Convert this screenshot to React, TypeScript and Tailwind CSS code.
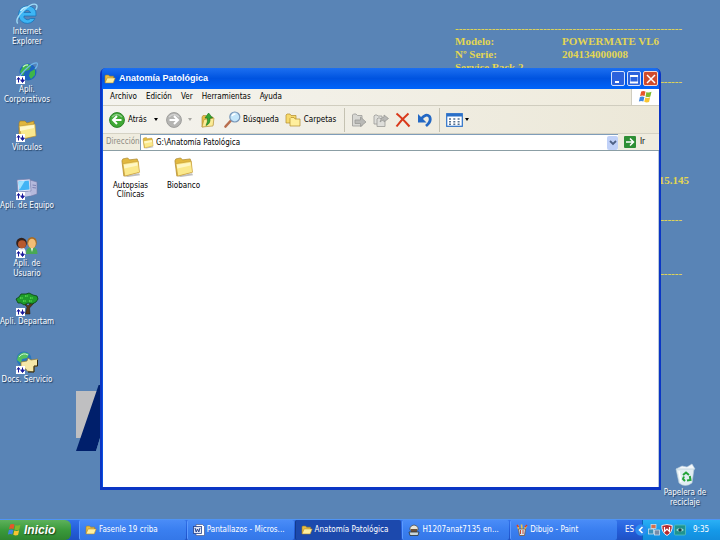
import React from 'react';

type IconProps = { className?: string };

const Folder = ({ className = '' }: IconProps) => (
  <svg viewBox="0 0 22 22" className={className} aria-hidden="true">
    <path d="M5 20 L20 17 L21 19 L8 21Z" fill="#000" opacity=".25" />
    <path d="M2 4 L3 2 L8 1 L10 3 L18 2 L19 5 L19 16 L4 20Z" fill="#e2b93f" stroke="#a8822a" strokeWidth=".7" />
    <path d="M3 7 L19 4.5 L20.5 16 L5 20Z" fill="#fbe98c" stroke="#c79c34" strokeWidth=".7" />
    <path d="M4 8 L18 6 L18.5 9 L4.5 12Z" fill="#fff7c4" />
  </svg>
);

const OpenFolder = ({ className = '' }: IconProps) => (
  <svg viewBox="0 0 16 14" className={className} aria-hidden="true">
    <path d="M1 12 V2.5 L2 1.5 H6 L7.5 3 H13 V6" fill="#e9bd45" stroke="#a57c1c" strokeWidth=".8" />
    <path d="M1 12.5 L4 5.5 H15.3 L12.5 12.5Z" fill="#fff0a0" stroke="#b88a24" strokeWidth=".8" />
  </svg>
);

const Flag = ({ className = '' }: IconProps) => (
  <svg viewBox="0 0 16 15" className={className} aria-hidden="true">
    <path d="M3.4 1.6 Q5.6.3 8 1.7 L7 6.5 Q4.7 5.3 2.2 6.5Z" fill="#e8562a" />
    <path d="M9 2.1 Q11.5 3.3 14.4 2 L13.2 6.9 Q10.6 8 8 6.9Z" fill="#7fba2c" />
    <path d="M2 7.5 Q4.4 6.4 6.8 7.6 L5.7 12.3 Q3.4 11.2.9 12.3Z" fill="#3f86e0" />
    <path d="M7.8 8 Q10.2 9.1 13 7.9 L11.8 12.9 Q9.2 14 6.7 12.7Z" fill="#f8c531" />
  </svg>
);

const Shortcut = () => (
  <g>
    <rect x="1" y="16" width="9" height="8" fill="#fff" />
    <path d="M3.5 22.5 V19 M2 19.5 L3.5 17.5 L5 19.5 M7.5 17.5 V21 M5.8 20 H9.4 L7.5 22.5Z" fill="#1a1a9c" stroke="#1a1a9c" strokeWidth="1" />
  </g>
);

const Glyph = ({ children }: { children: React.ReactNode }) => (
  <svg viewBox="0 0 24 24" className="size-6 shrink-0" aria-hidden="true">
    {children}
  </svg>
);

const Explorer = () => (
  <Glyph>
    <path d="M12 4 A8.7 8.7 0 1 0 20 16.5 H15.5 Q12 19.5 9 15.5 V14 H21 Q22 4 12 4Z M9 10.5 Q12 6 15.8 10.5Z" fill="#3db5f4" fillRule="evenodd" stroke="#116fb8" strokeWidth=".7" />
    <path d="M5.5 9 Q8 5.5 12 5.3" stroke="#b9ecff" strokeWidth="1.4" fill="none" />
    <path d="M2.7 21.5 Q-.5 17 9 8 Q18 0 21.5 3 Q22.8 4.5 20.8 8" stroke="#9fdcf8" strokeWidth="1.4" fill="none" />
  </Glyph>
);

const Globe = () => (
  <Glyph>
    <circle cx="13" cy="12" r="8.5" fill="#1b65bf" />
    <path d="M8 6 Q13 2 16 6 L14 10 L10 11 L8 16 L5 12Z M15 12 L20 9 L20 15 L16 19 L14 16Z" fill="#3fb54a" />
    <path d="M8 7 Q10 4.5 13 5" stroke="#c1f0c0" strokeWidth="1.3" fill="none" />
    <path d="M4 21 Q3 17 10 10 Q18 2 22 3 Q23.5 5 20 9" stroke="#70b6ea" strokeWidth="1.2" fill="none" />
    <Shortcut />
  </Glyph>
);

const FolderLink = () => (
  <Glyph>
    <path d="M4 20 V5 L5 3 L10 3 L12 5 L19 3 V18 L8 21Z" fill="#e0b63e" stroke="#9c7928" strokeWidth=".6" />
    <path d="M4 8 L20 6 L21 18 L7 21Z" fill="#fae88e" stroke="#b78e35" strokeWidth=".6" />
    <path d="M5 9 L19 7 L19 10 L5 13Z" fill="#fff8cb" />
    <Shortcut />
  </Glyph>
);

const Computer = () => (
  <Glyph>
    <path d="M15 4 L22 6 V18 L16 20 L12 18Z" fill="#b5b9dc" stroke="#7378a8" strokeWidth=".6" />
    <path d="M17.5 9 L21 9.5 M17.5 11.5 L21 12" stroke="#6970a5" strokeWidth=".8" />
    <path d="M2 4 L15 3 L16 15 L3 16Z" fill="#e1e4f8" stroke="#7880ae" strokeWidth=".7" />
    <path d="M3.5 5.4 L13.8 4.5 L14.6 13.5 L4.3 14.4Z" fill="#41b4f5" />
    <path d="M3.5 5.4 L10 4.8 L5 13 L4.2 13Z" fill="#9de2ff" />
    <path d="M8 16 L15 15.5 L16 19.5 L9 21Z" fill="#c4c8e6" />
    <Shortcut />
  </Glyph>
);

const Users = () => (
  <Glyph>
    <path d="M11 20 Q11 13 17 13 Q22.5 13 22.5 20Z" fill="#49a854" />
    <path d="M15.5 13 L17 18 L18.5 13Z" fill="#eff7ed" />
    <ellipse cx="17" cy="8.5" rx="4.8" ry="5.6" fill="#a86c23" />
    <ellipse cx="17" cy="9.6" rx="3.8" ry="4.8" fill="#f4bd76" />
    <path d="M2 20 Q2 13 7 13 Q11 14 11 20Z" fill="#e8e8ee" />
    <circle cx="6.5" cy="9" r="5.3" fill="#33211c" />
    <ellipse cx="7" cy="10.2" rx="4" ry="4" fill="#b8592d" />
    <Shortcut />
  </Glyph>
);

const Tree = () => (
  <Glyph>
    <path d="M10.5 22 L12 15 L8 11 L10 11 L13 14 L17 10 L19 11 L14.5 16 L15 22Z" fill="#593817" stroke="#20170a" strokeWidth=".5" />
    <path d="M1 7 L4 5 L6 2 L11 2 L14 1 L18 3 L22 4 L23 7 L21 10 L17 12 L13 11 L9 13 L6 11 L3 11Z" fill="#1f9a2a" stroke="#0a4211" strokeWidth=".8" />
    <path d="M5 6 H8 M10 4 H13 M15 6 H18 M8 9 H11 M14 9 H17" stroke="#56dd4d" strokeWidth="1.3" strokeDasharray="1.5 .8" />
    <Shortcut />
  </Glyph>
);

const Docs = () => (
  <Glyph>
    <circle cx="9" cy="9" r="7.5" fill="#2877bd" />
    <path d="M3 6 Q8 0 14 4 L12 8 L7 9 L6 13 L2 10Z" fill="#54c15b" />
    <path d="M4 7 Q8 2 13 5" stroke="#c6f2e0" fill="none" />
    <path d="M13 8 L16 10 L22.5 9 V16 L19 17 V22 L12 21 L11 19 L6 18 V12 L12 11Z" fill="#f5e8a9" stroke="#92762d" strokeWidth=".7" />
    <path d="M22.5 10 V16 H19 V22 H13" stroke="#2d240c" strokeWidth="1" fill="none" />
    <Shortcut />
  </Glyph>
);

const Bin = () => (
  <Glyph>
    <path d="M3 6 L9 3 L14 4 L19 1 L22 6 L18 8 L6 8Z" fill="#f3f8fb" stroke="#b5cbdc" strokeWidth=".6" />
    <path d="M3 6 L21 6 L19 20 Q12 25 6 20Z" fill="#e2eef3" stroke="#b4c9d6" strokeWidth=".6" />
    <path d="M6 8 L8 19" stroke="#fff" strokeWidth="1.4" />
    <path d="M10 12 L13 9.5 L16 12 M16.8 13 L17.5 17 L14 17.5 M12 18 L10 16 L11 13.5" fill="none" stroke="#25a43a" strokeWidth="2" />
  </Glyph>
);

const shortcuts = [
  { label: 'Internet Explorer', icon: <Explorer /> },
  { label: 'Apli. Corporativos', icon: <Globe /> },
  { label: 'Vínculos', icon: <FolderLink /> },
  { label: 'Apli. de Equipo', icon: <Computer /> },
  { label: 'Apli. de Usuario', icon: <Users /> },
  { label: 'Apli. Departam', icon: <Tree /> },
  { label: 'Docs. Servicio', icon: <Docs /> },
];

const narrow = ['Internet Explorer', 'Apli. Corporativos', 'Apli. de Usuario', 'Papelera de reciclaje'];

const DesktopIcon = ({ label, icon }: { label: string; icon: React.ReactNode }) => (
  <button className="flex h-[58px] w-[54px] flex-col items-center gap-px pt-0.5 text-center leading-[10px] text-white [text-shadow:1px_1px_1px_#1d3a5c]">
    {icon}
    <span className={narrow.includes(label) ? 'w-[48px]' : 'whitespace-nowrap'}>{label}</span>
  </button>
);

const dashes = '-'.repeat(62);

const SystemInfo = () => (
  <div className="absolute top-[22px] right-[31px] w-[234px] font-['Liberation_Serif',serif] text-[11px] leading-[13px] font-bold whitespace-nowrap text-[#e3d653]">
    <p>{dashes}</p>
    <dl className="grid grid-cols-[107px_1fr]">
      <dt>Modelo:</dt>
      <dd>POWERMATE VL6</dd>
      <dt>Nº Serie:</dt>
      <dd>204134000008</dd>
      <dt>Service Pack 2</dt>
    </dl>
    <p className="mt-px">{dashes}</p>
    <p className="mt-[86px] text-right">15.145</p>
    <p className="mt-[26px]">{dashes}</p>
    <p className="mt-[41px]">{dashes}</p>
  </div>
);

const WallpaperLogo = () => (
  <svg viewBox="0 0 30 66" className="absolute top-[385px] left-[76px] h-[66px] w-[30px]" aria-hidden="true">
    <path d="M0 6 H30 V53 H0Z" fill="#bfbfc1" />
    <path d="M24 -4 H30 V40 L24 53 L20 66 H0Z" fill="#001f6b" />
    <path d="M24 53 H30 V66 H20Z" fill="#5984b6" />
  </svg>
);

const Caret = () => (
  <svg viewBox="0 0 4 3" className="h-[3px] w-1" aria-hidden="true">
    <path d="M0 0 H4 L2 3Z" fill="#000" />
  </svg>
);

const TitleBar = () => (
  <header className="flex h-[21px] items-center gap-[3px] rounded-t bg-linear-to-b from-[#1c6ff0] via-[#0053e0] to-[#0064fb] pr-px pl-0.5">
    <OpenFolder className="h-[10px] w-3" />
    <h1 className="flex-1 font-['Liberation_Sans',sans-serif] text-[9px] font-bold text-white">Anatomía Patológica</h1>
    <div className="flex gap-0.5">
      <button aria-label="Minimizar" className="grid h-[15px] w-[14px] place-items-center rounded-xs border border-[#d5e1fb] bg-[#2c62dc]">
        <svg viewBox="0 0 12 12" className="size-3"><path d="M3 9 H7" stroke="#fff" strokeWidth="2" /></svg>
      </button>
      <button aria-label="Maximizar" className="grid h-[15px] w-[14px] place-items-center rounded-xs border border-[#d5e1fb] bg-[#2c62dc]">
        <svg viewBox="0 0 12 12" className="size-3"><path d="M2.5 10 V3 M9.5 3 V10" stroke="#7fa4f1" /><path d="M2 3 H10 M2 9.5 H10" stroke="#fff" strokeWidth="2" /></svg>
      </button>
      <button aria-label="Cerrar" className="grid h-[15px] w-[15px] place-items-center rounded-xs border border-[#f5d9d0] bg-[#cf4b2c]">
        <svg viewBox="0 0 12 12" className="size-3"><path d="M2 2 L10 10 M10 2 L2 10" stroke="#fff" strokeWidth="1.5" /></svg>
      </button>
    </div>
  </header>
);

const MenuBar = () => (
  <nav className="flex h-[17px] items-stretch border-b border-[#d0cdbf] bg-linear-to-r from-[#f4f3ee] to-[#efebdc]">
    <div className="flex flex-1 items-center gap-[9px] pl-[7px]">
      <button>Archivo</button>
      <button>Edición</button>
      <button>Ver</button>
      <button>Herramientas</button>
      <button>Ayuda</button>
    </div>
    <div className="grid w-[28px] place-items-center border-l border-[#d0cdbf] bg-white">
      <Flag className="h-[14px] w-[15px]" />
    </div>
  </nav>
);

const Round = ({ fill, edge, d }: { fill: string; edge: string; d: string }) => (
  <svg viewBox="0 0 16 16" className="size-4" aria-hidden="true">
    <circle cx="8" cy="8" r="7.4" fill={fill} stroke={edge} />
    <path d="M3 5 Q8 0 13 5" stroke="#fff" strokeOpacity=".4" strokeWidth="1.5" fill="none" />
    <path d={d} stroke="#fff" strokeWidth="2" fill="none" />
  </svg>
);

const Toolbar = () => (
  <div className="flex h-[28px] items-center border-b border-[#d5d2c4] bg-linear-to-r from-[#f4f3ee] to-[#ece8d8] pl-1.5">
    <button className="flex w-[43px] items-center gap-[3px]">
      <Round fill="#40a936" edge="#2b8327" d="M12.5 8 H4 M8 4 L4 8 L8 12" />
      Atrás
    </button>
    <button aria-label="Historial atrás" className="grid w-[8px] place-items-center"><Caret /></button>
    <button aria-label="Adelante" className="ml-1.5"><Round fill="#b5b5b3" edge="#9d9d9b" d="M3.5 8 H12 M8 4 L12 8 L8 12" /></button>
    <button aria-label="Historial adelante" className="ml-1.5 opacity-30"><Caret /></button>
    <button aria-label="Arriba" className="ml-2">
      <svg viewBox="0 0 16 16" className="size-4">
        <path d="M2 15 V5 L3 3.5 H6 L8 5 H13 V13Z" fill="#e6bd48" stroke="#a8832c" strokeWidth=".6" />
        <path d="M2 15 L4 7.5 L14 6 L13 14Z" fill="#fbec97" stroke="#b08c30" strokeWidth=".6" />
        <path d="M6 13.5 Q10.5 12 10 6 H12.5 L8.6 1 L5 6 H7.4 Q8 10 6 13.5Z" fill="#37a834" stroke="#19701b" strokeWidth=".6" />
      </svg>
    </button>
    <button className="ml-2 flex items-center gap-0.5">
      <svg viewBox="0 0 17 17" className="size-[17px]">
        <path d="M6.5 10 L1.5 15.5" stroke="#b86e4e" strokeWidth="2.6" strokeLinecap="round" />
        <circle cx="10.8" cy="6" r="5" fill="#c4e6fa" stroke="#7896b8" strokeWidth="1.2" />
        <path d="M8 5 Q9 2.8 11.5 3" stroke="#fff" strokeWidth="1.4" fill="none" />
      </svg>
      Búsqueda
    </button>
    <button className="ml-1.5 flex items-center gap-[3px]">
      <svg viewBox="0 0 16 14" className="h-[14px] w-4">
        <path d="M1 10 V2 L2 1 H5 L6 2.5 H11 V10Z" fill="#f7da6c" stroke="#b28d2b" strokeWidth=".7" />
        <path d="M5 13 V5.5 L6 4.5 H9 L10 6 H15 V13Z" fill="#ffef9d" stroke="#b28d2b" strokeWidth=".7" />
      </svg>
      Carpetas
    </button>
    <div className="mr-1.5 ml-2 h-6 w-px bg-[#c5c2b2]" />
    <button aria-label="Mover a">
      <svg viewBox="0 0 16 16" className="size-4" fill="#d8d8d4" stroke="#9b9b97" strokeWidth=".8">
        <path d="M1.5 14 V3 L2.5 2 H5 L6.5 3.5 H11 V14Z" />
        <path d="M4 8 H9.5 V5 L15 10 L9.5 14.5 V11.5 H4Z" fill="#b9b9b6" />
      </svg>
    </button>
    <button aria-label="Copiar a" className="ml-1.5">
      <svg viewBox="0 0 16 16" className="size-4" fill="#dededa" stroke="#9b9b97" strokeWidth=".8">
        <path d="M1 12 V4 L2 3 H4 L5 4 H9 V12Z" />
        <path d="M4 14.5 V7 L5 6 H7 L8 7 H12 V14.5Z" />
        <path d="M7 10 Q8 5 11 5 V3 L15.5 6.5 L11 10 V8 Q9 8 7 10Z" fill="#b9b9b6" />
      </svg>
    </button>
    <button aria-label="Eliminar" className="ml-1.5">
      <svg viewBox="0 0 16 16" className="size-4">
        <path d="M1.5 1.5 Q7 6 14.5 14.5 M13.5 1.5 Q7 7 1.5 14.5" stroke="#d93a1c" strokeWidth="2.1" fill="none" />
      </svg>
    </button>
    <button aria-label="Deshacer" className="ml-1.5">
      <svg viewBox="0 0 16 16" className="size-4">
        <path d="M4 7 Q9 1 12.5 4.5 Q15 9 9 14" stroke="#2368c4" strokeWidth="2.8" fill="none" />
        <path d="M1 2 V10.5 H9.5Z" fill="#2368c4" />
      </svg>
    </button>
    <div className="mx-1.5 h-6 w-px bg-[#c5c2b2]" />
    <button aria-label="Vistas" className="flex items-center gap-0.5">
      <svg viewBox="0 0 17 14" className="h-[14px] w-[17px]">
        <rect x=".7" y=".7" width="15.6" height="12.6" fill="#fff" stroke="#2b70c8" strokeWidth="1.2" />
        <path d="M1 2.2 H16" stroke="#2b70c8" strokeWidth="2.6" />
        <path d="M3 6 H14 M3 8.7 H14 M3 11.2 H14" stroke="#55708e" strokeWidth="1.4" strokeDasharray="2 2.3" />
      </svg>
      <Caret />
    </button>
  </div>
);

const AddressBar = () => (
  <div className="flex h-[17px] items-stretch border-b border-[#8b9ea5] bg-[#efecdf]">
    <label htmlFor="address" className="flex w-[37px] items-center pl-[3px] text-[#8d8b82]">Dirección</label>
    <div className="flex flex-1 items-center gap-0.5 border-t border-l border-[#7f9db9] bg-white pl-px">
      <Folder className="size-3" />
      <input id="address" defaultValue="G:\Anatomía Patológica" className="min-w-0 flex-1 bg-transparent outline-none" />
      <button aria-label="Desplegar direcciones" className="grid h-[14px] w-[11px] place-items-center rounded-xs bg-[#c0d1f8]">
        <svg viewBox="0 0 8 6" className="h-[6px] w-2"><path d="M1 1 L4 4 L7 1" stroke="#4d6185" strokeWidth="1.8" fill="none" /></svg>
      </button>
    </div>
    <button className="flex w-[41px] items-center gap-1 pl-1.5">
      <svg viewBox="0 0 12 12" className="size-3">
        <rect width="12" height="12" rx="1" fill="#2e8f36" />
        <path d="M2 6 H9 M6 2.5 L9.5 6 L6 9.5" stroke="#fff" strokeWidth="1.5" fill="none" />
      </svg>
      Ir
    </button>
  </div>
);

const ExplorerWindow = () => (
  <section className="absolute inset-x-0 top-[68px] bottom-[29px] mr-[59px] ml-[100px] flex flex-col rounded-t-md border-x-2 border-b-3 border-[#0b35c4] bg-[#0b50e0]">
    <TitleBar />
    <div className="ml-px flex flex-1 flex-col bg-white">
      <MenuBar />
      <Toolbar />
      <AddressBar />
      <main className="flex flex-1 items-start border-r border-[#b9c8dc] bg-white pt-1.5 pl-px text-center leading-[9px]">
        {['Autopsias Clínicas', 'Biobanco'].map((name) => (
          <button key={name} className="flex w-[53px] flex-col items-center gap-[3px]">
            <Folder className="size-[21px]" />
            <span className="w-[44px]">{name}</span>
          </button>
        ))}
      </main>
    </div>
  </section>
);

const WordIcon = () => (
  <svg viewBox="0 0 12 12" className="size-3 shrink-0" aria-hidden="true">
    <path d="M3 .5 H9.5 L11.5 2.5 V11.5 H3Z" fill="#fff" stroke="#4c5a8b" strokeWidth=".7" />
    <rect x=".5" y="2.5" width="8" height="7" fill="#dfe6f7" stroke="#24418c" strokeWidth=".8" />
    <path d="M2 4 L3.2 8 L4.5 5 L5.8 8 L7 4" fill="none" stroke="#24418c" strokeWidth="1" />
  </svg>
);

const ViewerIcon = () => (
  <svg viewBox="0 0 12 12" className="size-3 shrink-0" aria-hidden="true">
    <path d="M2 3.5 Q6 -1.5 10 3.5 V6 H2Z" fill="#e9e5d8" stroke="#4e4536" strokeWidth=".7" />
    <path d="M3 5 H9 V8 H3Z" fill="#6a503b" />
    <path d="M1 8 H11 L10 11.5 H2Z" fill="#c9d6da" stroke="#29343a" strokeWidth=".8" />
  </svg>
);

const PaintIcon = () => (
  <svg viewBox="0 0 12 12" className="size-3 shrink-0" aria-hidden="true">
    <path d="M3 6 L1.5 1 M6 6 L5.5 .5 M8 6 L10.5 1.5" stroke="#e8c553" strokeWidth="1.7" />
    <path d="M1 1 L2.5 3 M9 3 L11 1" stroke="#d43a2c" strokeWidth="1.5" />
    <path d="M2.5 5 H9.5 L8.5 11.5 H3.5Z" fill="#d9e6ef" stroke="#77553c" strokeWidth=".8" />
    <path d="M4.5 6 V10 M7 6 V10" stroke="#c5482f" />
  </svg>
);

const tasks = [
  { label: 'Fasenle 19 criba', icon: <OpenFolder className="h-[10px] w-3 shrink-0" /> },
  { label: 'Pantallazos - Micros...', icon: <WordIcon /> },
  { label: 'Anatomía Patológica', icon: <OpenFolder className="h-[10px] w-3 shrink-0" />, active: true },
  { label: 'H1207anat7135 en...', icon: <ViewerIcon /> },
  { label: 'Dibujo - Paint', icon: <PaintIcon /> },
];

const Taskbar = () => (
  <footer className="flex h-[21px] items-stretch border-t border-[#4f94f5] bg-linear-to-b from-[#3372e8] via-[#245edb] to-[#1f51c4] text-white">
    <button className="flex w-[71px] items-center gap-0.5 rounded-r-md bg-linear-to-b from-[#5db15b] via-[#3a9a3b] to-[#2f8530] pl-[7px] font-['Liberation_Sans',sans-serif] text-[12px] font-bold italic [text-shadow:1px_1px_1px_#1d4a1d]">
      <Flag className="h-[14px] w-[15px]" />
      Inicio
    </button>
    <div className="flex flex-1 gap-px pl-2">
      {tasks.map((task) => (
        <button
          key={task.label}
          className={`flex min-w-0 flex-1 items-center gap-0.5 rounded-xs border-l pl-[5px] whitespace-nowrap ${
            task.active ? 'border-[#123a8c] bg-[#1c49ad]' : 'border-[#5c9aff] bg-linear-to-b from-[#4a8cf7] via-[#3a7ff0] to-[#3477e8]'
          }`}
        >
          {task.icon}
          {task.label}
        </button>
      ))}
    </div>
    <button className="w-[25px]" aria-label="Idioma: ES">ES</button>
    <div className="flex w-[78px] items-center gap-px border-l border-[#0d62b8] bg-linear-to-b from-[#2ab0f5] via-[#159ae9] to-[#128ddd]">
      <button aria-label="Mostrar iconos ocultos" className="-ml-2">
        <svg viewBox="0 0 12 12" className="size-3">
          <circle cx="6" cy="6" r="5.8" fill="#2c8df0" />
          <path d="M7.5 3 L4.5 6 L7.5 9" stroke="#fff" strokeWidth="1.6" fill="none" />
        </svg>
      </button>
      <svg viewBox="0 0 12 12" className="size-3" aria-hidden="true">
        <rect x="3" y=".5" width="5" height="4" fill="#d4704d" stroke="#dde6ee" strokeWidth=".7" />
        <rect x=".5" y="5" width="5" height="5" fill="#3c93b8" stroke="#dde6ee" strokeWidth=".7" />
        <rect x="6.5" y="6" width="5" height="5" fill="#768ba8" stroke="#dde6ee" strokeWidth=".7" />
      </svg>
      <svg viewBox="0 0 12 12" className="size-3" aria-hidden="true">
        <path d="M.8 1.5 Q6 -.5 11.2 1.5 Q11.5 8.5 6 11.5 Q.5 8.5.8 1.5Z" fill="#b6292d" stroke="#f2eff0" />
        <path d="M3.5 3 V7.5 L6 5 L8.5 7.5 V3" stroke="#fff" strokeWidth="1.2" fill="none" />
      </svg>
      <svg viewBox="0 0 12 12" className="size-3" aria-hidden="true">
        <rect x=".5" y="1" width="11" height="10" rx="1" fill="#1f938f" stroke="#57c1bb" strokeWidth=".8" />
        <path d="M2 6 Q6 2 10 6 Q6 9.5 2 6Z" fill="#9fd9d4" />
        <circle cx="6" cy="6" r="1.7" fill="#124445" />
      </svg>
      <time className="ml-1.5">9:35</time>
    </div>
  </footer>
);

const App = () => (
  <div className="flex h-screen flex-col overflow-hidden bg-[#5984b6] font-['DejaVu_Sans_Condensed','DejaVu_Sans',sans-serif] text-[8px] text-black">
    <div className="relative min-h-0 flex-1">
      <div className="flex flex-col">
        {shortcuts.map((item) => (
          <DesktopIcon key={item.label} {...item} />
        ))}
      </div>
      <SystemInfo />
      <WallpaperLogo />
      <ExplorerWindow />
      <div className="absolute right-2 bottom-0">
        <DesktopIcon label="Papelera de reciclaje" icon={<Bin />} />
      </div>
    </div>
    <Taskbar />
  </div>
);

export default App;
